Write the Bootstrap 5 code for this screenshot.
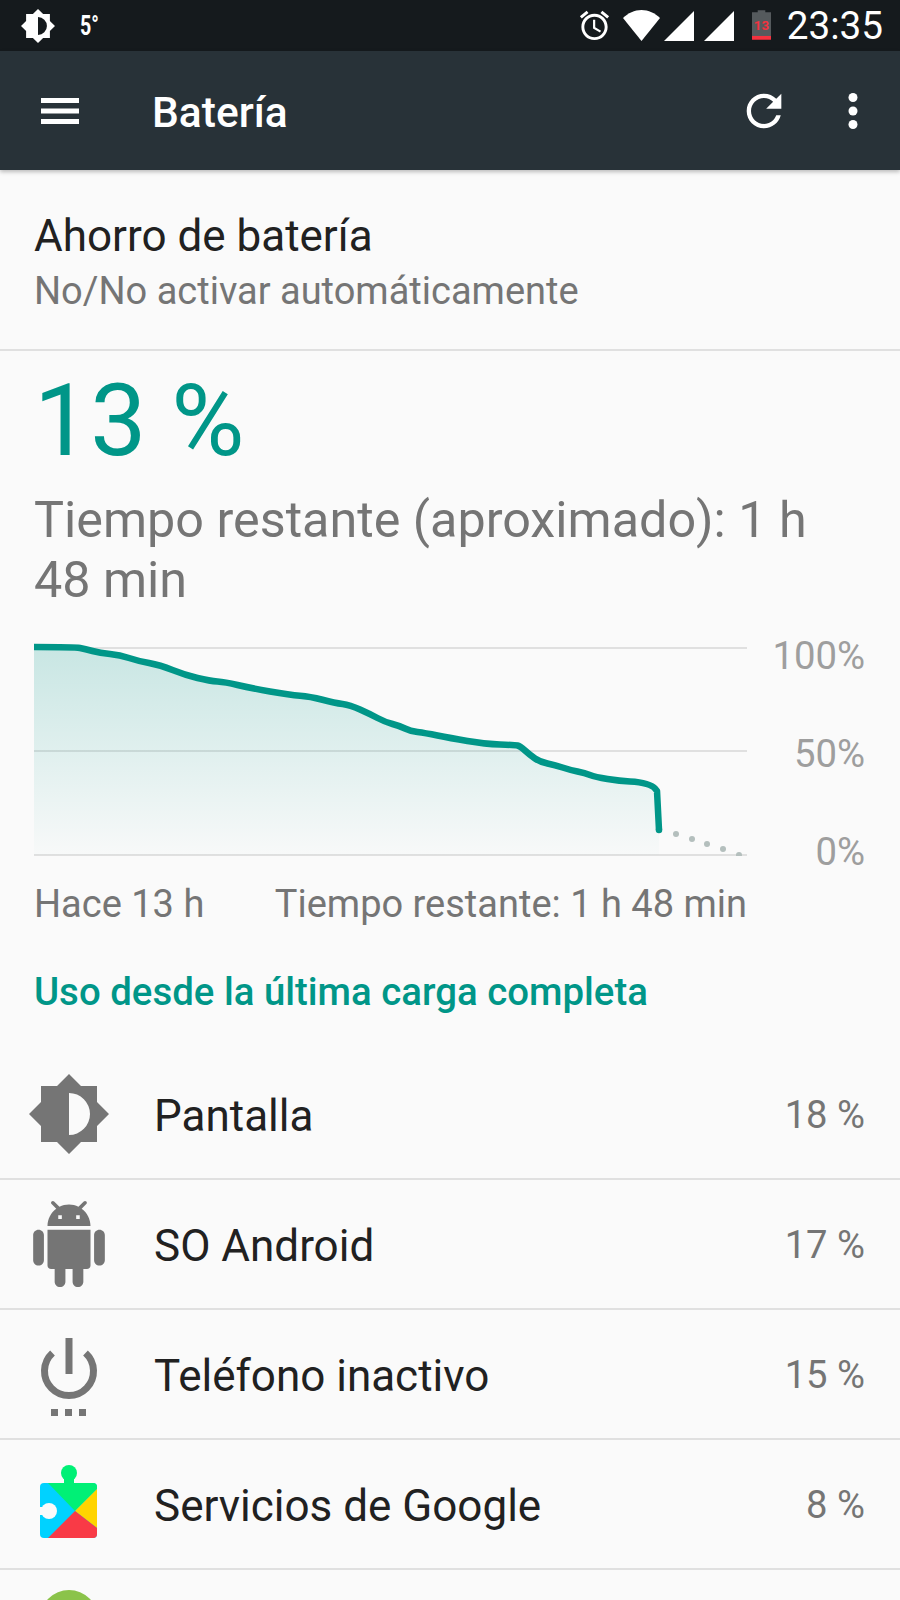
<!DOCTYPE html>
<html lang="es">
<head>
    <meta charset="UTF-8">
    <meta name="viewport" content="width=device-width, initial-scale=1.0">
    <title>Batería</title>
    <link href="https://cdn.jsdelivr.net/npm/bootstrap@5.3.0/dist/css/bootstrap.min.css" rel="stylesheet">
    <style>
        html, body { height: 1600px; overflow: hidden; }
        body {
            background-color: #fafafa;
            font-family: Roboto, "Liberation Sans", sans-serif;
            color: #212121;
        }
        svg { display: block; flex-shrink: 0; }
        .status-bar { height: 51px; background-color: #151a1d; color: #fff; padding: 0 17px 0 21px; }
        .temp { font-family: "Liberation Sans Narrow", Roboto, sans-serif; font-size: 28px; font-weight: 700; margin-left: 25px; transform: scaleX(.7); transform-origin: left; }
        .sb-wifi { margin-left: 11px; }
        .sb-sig1 { margin-left: 4px; }
        .sb-sig2 { margin-left: 10px; }
        .sb-batt { margin-left: 18px; }
        .clock { font-size: 38.700px; line-height: 51px; margin-left: 16px; }
        .app-bar { height: 119px; background-color: #283238; color: #fff; padding: 0 42px 0 40px; box-shadow: 0 2px 4px rgba(0,0,0,.25); position: relative; }
        .app-title { font-size: 42.500px; font-weight: 500; margin-left: 72px; padding-top: 4px; }
        .more-dots { margin-left: 58px; }
        .saver { height: 181px; padding: 36px 34px 0; border-bottom: 2px solid #e0e0e0; }
        .saver-title { font-size: 44px; line-height: 60px; }
        .saver-sub { font-size: 38px; line-height: 50px; color: #757575; }
        .level { font-size: 100px; line-height: 110px; color: #009688; padding: 15px 34px 0; }
        .remain { font-size: 50.300px; line-height: 60px; color: #757575; padding: 14px 34px 0; }
        .chart-wrap { height: 216px; padding: 0 35px 0 34px; margin-top: 30px; }
        .axis { height: 236px; margin-top: -4px; font-size: 38.300px; color: #9e9e9e; line-height: 40px; }
        .chart-foot { width: 713px; font-size: 38px; line-height: 44px; color: #757575; margin-top: 26px; margin-left: 34px; }
        .section-head { font-size: 38.400px; font-weight: 500; line-height: 44px; color: #009688; padding: 44px 34px 0; height: 124px; }
        .use-row { height: 130px; border-bottom: 2px solid #e0e0e0; padding: 0 35px 0 0; }
        .use-icon { width: 154px; }
        .use-icon svg { margin-left: 29px; }
        .use-icon svg.droid { margin-left: 26px; }
        .use-name { font-size: 44px; padding-top: 3px; }
        .use-pct { font-size: 38.200px; color: #757575; padding-top: 4px; }
        .end-icon { padding: 20px 0 0 40px; }
    </style>
</head>
<body>
    <!-- Status bar -->
    <div class="status-bar d-flex align-items-center">
        <svg width="34" height="34" viewBox="0 0 80 80"><path fill="#fff" fill-rule="evenodd" d="M40 0 52 12H68V28L80 40 68 52V68H52L40 80 28 68H12V52L0 40 12 28V12H28ZM40 19V61A21 21 0 0 0 40 19Z"/></svg>
        <span class="temp">5°</span>
        <div class="d-flex align-items-center ms-auto">
            <svg width="35" height="35" viewBox="0 0 24 24"><path fill="#fff" d="M22 5.72l-4.6-3.86-1.29 1.53 4.6 3.86L22 5.72zM7.88 3.39L6.6 1.86 2 5.71l1.29 1.53 4.59-3.85zM12.5 8H11v6l4.75 2.85.75-1.23-4-2.37V8zM12 4c-4.97 0-9 4.03-9 9s4.03 9 9 9 9-4.03 9-9-4.03-9-9-9zm0 16c-3.87 0-7-3.13-7-7s3.13-7 7-7 7 3.13 7 7-3.13 7-7 7z"/></svg>
            <svg class="sb-wifi" width="37" height="31" viewBox="0 0 37 31"><path fill="#fff" d="M18.500 31 0 8C5 3 11.500 0 18.500 0S32 3 37 8Z"/></svg>
            <svg class="sb-sig1" width="30" height="30" viewBox="0 0 30 30"><path fill="#fff" d="M0 30 30 0V30Z"/></svg>
            <svg class="sb-sig2" width="30" height="30" viewBox="0 0 30 30"><path fill="#fff" d="M0 30 30 0V30Z"/></svg>
            <svg class="sb-batt" width="19" height="31" viewBox="0 0 20 32"><path fill="#555a5d" d="M6 0h8v2h6v27H0V2h6Z"/><rect y="27" width="20" height="4" fill="#f4323f"/><text x="10" y="21" text-anchor="middle" font-family="Roboto, sans-serif" font-size="14" font-weight="700" fill="#f4323f">13</text></svg>
            <span class="clock">23:35</span>
        </div>
    </div>

    <!-- App bar -->
    <div class="app-bar d-flex align-items-center">
        <svg width="40" height="26" viewBox="0 0 40 26"><path fill="#fff" d="M1 0h38v5H1zM1 10.500h38v5H1zM1 21h38v5H1z"/></svg>
        <span class="app-title">Batería</span>
        <div class="d-flex align-items-center ms-auto">
            <svg width="52" height="52" viewBox="0 0 24 24"><path fill="#fff" d="M17.65 6.35C16.2 4.9 14.21 4 12 4c-4.42 0-7.99 3.58-7.99 8s3.57 8 7.99 8c3.73 0 6.84-2.55 7.73-6h-2.08c-.82 2.33-3.04 4-5.65 4-3.31 0-6-2.69-6-6s2.69-6 6-6c1.66 0 3.14.69 4.22 1.78L13 11h7V4l-2.35 2.35z"/></svg>
            <svg class="more-dots" width="10" height="36" viewBox="0 0 10 36"><circle cx="5" cy="4.500" r="4.500" fill="#fff"/><circle cx="5" cy="18" r="4.500" fill="#fff"/><circle cx="5" cy="31.500" r="4.500" fill="#fff"/></svg>
        </div>
    </div>

    <!-- Battery saver -->
    <div class="saver">
        <div class="saver-title">Ahorro de batería</div>
        <div class="saver-sub">No/No activar automáticamente</div>
    </div>

    <div class="level">13 %</div>
    <div class="remain">Tiempo restante (aproximado): 1 h<br>48 min</div>

    <!-- Chart -->
    <div class="chart-wrap d-flex align-items-start">
        <svg width="713" height="216" viewBox="34 640 713 216">
            <defs>
                <linearGradient id="fade" x1="0" y1="0" x2="0" y2="1">
                    <stop offset="0" stop-color="#009688" stop-opacity=".2"/>
                    <stop offset="1" stop-color="#009688" stop-opacity=".01"/>
                </linearGradient>
            </defs>
            <path d="M34 648H747M34 751H747M34 855H747" stroke="#e0e0e0" stroke-width="2"/>
            <path fill="url(#fade)" id="area"/>
            <path fill="none" stroke="#009688" stroke-width="6.500" stroke-linejoin="round" id="line"/>
            <circle cx="659" cy="830" r="3.250" fill="#009688"/>
            <g fill="#b4bfbd">
                <circle cx="676" cy="834" r="3"/><circle cx="692" cy="839" r="3"/><circle cx="707" cy="844" r="3"/><circle cx="723" cy="849" r="3"/><circle cx="739" cy="855" r="3"/>
            </g>
        </svg>
        <div class="axis d-flex flex-column justify-content-between align-items-end flex-grow-1">
            <span>100%</span><span>50%</span><span>0%</span>
        </div>
    </div>
    <div class="chart-foot d-flex justify-content-between">
        <span>Hace 13 h</span><span>Tiempo restante: 1 h 48 min</span>
    </div>

    <div class="section-head">Uso desde la última carga completa</div>

    <!-- Usage list -->
    <div id="usage"></div>

    <div class="end-icon d-flex">
        <svg width="58" height="58" viewBox="0 0 58 58"><circle cx="29" cy="29" r="29" fill="#8bc34a"/></svg>
    </div>

    <script src="https://cdn.jsdelivr.net/npm/bootstrap@5.3.0/dist/js/bootstrap.bundle.min.js"></script>
    <script>
        // Battery curve, read off the graph
        const curve = [[34,647],[75,647],[85,649],[100,653],[120,655],[138,661],[160,665],[185,675],[210,681],[225,682],[250,688],[290,695],[310,696.5],[335,703],[350,705],[370,714],[385,722],[400,726],[410,731],[425,733],[450,738],[485,744],[515,745],[520,746],[530,755],[540,762],[555,765],[570,770],[585,773],[595,777],[620,781],[640,782],[653,786],[657,791]];
        // smooth through midpoints, the last drop stays straight
        let d = 'M' + curve[0].join(' ');
        for (let i = 1; i < curve.length - 1; i++) {
            const mx = (curve[i][0] + curve[i + 1][0]) / 2;
            const my = (curve[i][1] + curve[i + 1][1]) / 2;
            d += `Q${curve[i][0]} ${curve[i][1]} ${mx} ${my}`;
        }
        d += 'L657 791L659 830';
        document.getElementById('line').setAttribute('d', d);
        document.getElementById('area').setAttribute('d', d + 'V855H34V647Z');

        const icons = {
            screen: '<svg width="80" height="80" viewBox="0 0 80 80"><path fill="#757575" fill-rule="evenodd" d="M40 0 52 12H68V28L80 40 68 52V68H52L40 80 28 68H12V52L0 40 12 28V12H28ZM40 19V61A21 21 0 0 0 40 19Z"/></svg>',
            android: '<svg class="droid" width="86" height="86" viewBox="0 0 24 24"><path fill="#757575" d="M6 18c0 .55.45 1 1 1h1v3.5c0 .83.67 1.5 1.5 1.5s1.5-.67 1.5-1.5V19h2v3.5c0 .83.67 1.5 1.5 1.5s1.5-.67 1.5-1.5V19h1c.55 0 1-.45 1-1V8H6v10zM3.5 8C2.67 8 2 8.67 2 9.5v7c0 .83.67 1.5 1.500 1.500S5 17.33 5 16.5v-7C5 8.67 4.33 8 3.5 8zm17 0c-.83 0-1.5.67-1.5 1.5v7c0 .83.67 1.5 1.5 1.5s1.5-.67 1.5-1.5v-7c0-.83-.67-1.5-1.5-1.5zm-4.97-5.84l1.3-1.3c.2-.2.2-.51 0-.71-.2-.2-.51-.2-.71 0l-1.48 1.48C13.85 1.23 12.95 1 12 1c-.96 0-1.86.23-2.66.63L7.85.15c-.2-.2-.51-.2-.71 0-.2.2-.2.51 0 .71l1.31 1.31C6.97 3.26 6 5.01 6 7h12c0-1.99-.97-3.75-2.47-4.84zM10 5H9V4h1v1zm5 0h-1V4h1v1z"/></svg>',
            power: '<svg width="80" height="84" viewBox="0 0 80 84"><path fill="none" stroke="#757575" stroke-width="7" d="M23.500 21A24.500 24.500 0 1 0 56.500 21"/><path fill="#757575" d="M36.500 6h7v36h-7zM22 77h7v7h-7zM36 77h7v7h-7zM50 77h7v7h-7z"/></svg>',
            play: '<svg width="80" height="78" viewBox="0 0 80 78"><g transform="translate(11 0)"><circle cx="29" cy="8" r="8" fill="#00f076"/><path fill="#00f076" d="M24 12h10v7H24z"/><rect y="18" width="57" height="55" rx="4" fill="#00d2ff"/><path fill="#00f076" d="M8 18H53Q57 18 57 22V24L35 46Z"/><path fill="#ffd400" d="M57 24V63L35 46Z"/><path fill="#f93a46" d="M8 73 35 46 57 63V69Q57 73 53 73Z"/><circle cx="9" cy="46" r="8" fill="#fafafa"/><path fill="#fafafa" d="M-1 42h5v8h-5z"/></g></svg>'
        };
        const rows = [
            ['screen', 'Pantalla', '18 %'],
            ['android', 'SO Android', '17 %'],
            ['power', 'Teléfono inactivo', '15 %'],
            ['play', 'Servicios de Google', '8 %']
        ];
        document.getElementById('usage').innerHTML = rows.map(r => `
            <div class="use-row d-flex align-items-center">
                <div class="use-icon">${icons[r[0]]}</div>
                <span class="use-name flex-grow-1">${r[1]}</span>
                <span class="use-pct">${r[2]}</span>
            </div>`).join('');
    </script>
</body>
</html>
